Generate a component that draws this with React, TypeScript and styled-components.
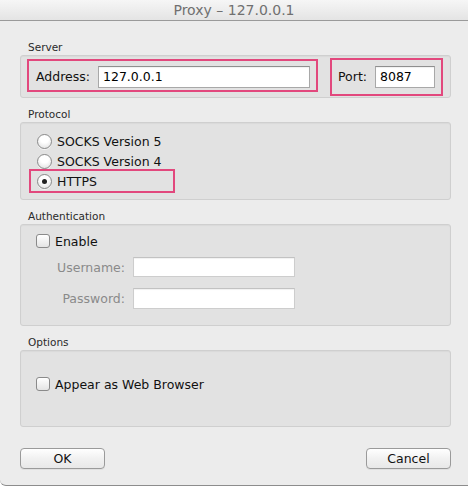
import React from "react";
import styled, { createGlobalStyle } from "styled-components";

const Global = createGlobalStyle`
  html, body { margin: 0; padding: 0; background: #ffffff; }
  body { font-family: "DejaVu Sans", "Liberation Sans", sans-serif; }
  * { box-sizing: border-box; }
`;

const Window = styled.div`
  width: 468px;
  height: 486px;
  background: #ececec;
  border-bottom: 1px solid #8c8c8c;
  border-bottom-left-radius: 6px;
  display: flex;
  flex-direction: column;
  overflow: hidden;
`;

const TitleBar = styled.div`
  height: 21px;
  flex: none;
  background: linear-gradient(#f6f6f6, #e4e4e4);
  border-bottom: 1px solid #9a9a9a;
  display: flex;
  align-items: center;
  justify-content: center;
  font-size: 14px;
  color: #707070;
  line-height: 20px;
`;

const Content = styled.div`
  flex: 1;
  display: flex;
  flex-direction: column;
  padding: 20px 17px 0 20px;
  gap: 10px;
`;

const Section = styled.div`
  display: flex;
  flex-direction: column;
`;

const SectionLabel = styled.div`
  font-size: 10.5px;
  line-height: 13px;
  color: #2a2a2a;
  padding-left: 8px;
  margin-bottom: 1px;
`;

const GroupBox = styled.div<{ $pad: string; $height?: number }>`
  background: #e2e2e2;
  border: 1px solid #cfcfcf;
  border-radius: 3px;
  box-shadow: inset 0 1px 1px rgba(0, 0, 0, 0.04);
  padding: ${(p) => p.$pad};
  ${(p) => (p.$height ? `height: ${p.$height}px;` : "")}
  display: flex;
  flex-direction: column;
`;

const ServerRow = styled.div`
  display: flex;
  align-items: flex-start;
  gap: 12px;
`;

const Highlight = styled.div<{ $w: number; $h: number; $top: number; $pad: string }>`
  width: ${(p) => p.$w}px;
  height: ${(p) => p.$h}px;
  margin-top: ${(p) => p.$top}px;
  border: 2px solid #e2487d;
  padding: ${(p) => p.$pad};
  display: flex;
  align-items: flex-start;
  gap: 8px;
`;

const FieldLabel = styled.span`
  font-size: 12.5px;
  line-height: 22px;
  color: #111;
`;

const TextInput = styled.div<{ $w: number; $h?: number; $dim?: boolean }>`
  width: ${(p) => p.$w}px;
  height: ${(p) => p.$h ?? 22}px;
  background: #ffffff;
  border: 1px solid ${(p) => (p.$dim ? "#cdcdcd" : "#a8a8a8")};
  border-top-color: ${(p) => (p.$dim ? "#c2c2c2" : "#8f8f8f")};
  box-shadow: inset 0 1px 1px rgba(0, 0, 0, 0.06);
  font-size: 12.5px;
  line-height: 20px;
  padding-left: 4px;
  color: #000;
`;

const OptionRow = styled.div<{ $marked?: boolean }>`
  height: ${(p) => (p.$marked ? 24 : 20)}px;
  width: ${(p) => (p.$marked ? "146px" : "auto")};
  margin: ${(p) => (p.$marked ? "-2px 0" : "0")};
  border: ${(p) => (p.$marked ? "2px solid #e2487d" : "none")};
  padding-left: ${(p) => (p.$marked ? 6 : 8)}px;
  display: flex;
  align-items: center;
  gap: 5px;
  font-size: 12.5px;
  color: #111;
`;

const Radio = styled.span<{ $on?: boolean }>`
  width: 15px;
  height: 15px;
  border-radius: 50%;
  border: 1px solid #8a8a8a;
  background: radial-gradient(circle at 50% 30%, #ffffff 35%, #dcdcdc 100%);
  box-shadow: 0 1px 0 rgba(255, 255, 255, 0.6);
  display: flex;
  align-items: center;
  justify-content: center;
  flex: none;
  &::after {
    content: "";
    width: 5px;
    height: 5px;
    border-radius: 50%;
    background: ${(p) => (p.$on ? "#222" : "transparent")};
  }
`;

const Check = styled.span`
  width: 14px;
  height: 14px;
  border-radius: 3px;
  border: 1px solid #8a8a8a;
  background: linear-gradient(#ffffff, #e4e4e4);
  flex: none;
`;

const CheckRow = styled.div`
  height: 20px;
  display: flex;
  align-items: center;
  gap: 5px;
  padding-left: 7px;
  font-size: 12.5px;
  color: #111;
`;

const CredRow = styled.div<{ $top: number }>`
  display: flex;
  align-items: center;
  margin-top: ${(p) => p.$top}px;
  gap: 8px;
`;

const CredLabel = styled.span`
  width: 96px;
  text-align: right;
  font-size: 12.5px;
  color: #8a8a8a;
`;

const ButtonRow = styled.div`
  display: flex;
  justify-content: space-between;
  margin-top: 11px;
`;

const Button = styled.button`
  width: 85px;
  height: 21px;
  border: 1px solid #9a9a9a;
  border-radius: 4px;
  background: linear-gradient(#ffffff, #f1f1f1 50%, #e8e8e8);
  box-shadow: 0 1px 0 rgba(0, 0, 0, 0.05);
  font-family: "DejaVu Sans", "Liberation Sans", sans-serif;
  font-size: 12.5px;
  color: #111;
  padding: 0;
`;

export default function App() {
  return (
    <Window>
      <Global />
      <TitleBar>Proxy – 127.0.0.1</TitleBar>
      <Content>
        <Section>
          <SectionLabel>Server</SectionLabel>
          <GroupBox $pad="2px 7px 1px 6px" $height={43}>
            <ServerRow>
              <Highlight $w={291} $h={33} $top={1} $pad="5px 5px 0 7px">
                <FieldLabel>Address:</FieldLabel>
                <TextInput $w={212}>127.0.0.1</TextInput>
              </Highlight>
              <Highlight $w={113} $h={38} $top={0} $pad="6px 6px 0 6px">
                <FieldLabel>Port:</FieldLabel>
                <TextInput $w={60}>8087</TextInput>
              </Highlight>
            </ServerRow>
          </GroupBox>
        </Section>

        <Section>
          <SectionLabel>Protocol</SectionLabel>
          <GroupBox $pad="8px 8px" $height={78}>
            <OptionRow>
              <Radio />
              SOCKS Version 5
            </OptionRow>
            <OptionRow>
              <Radio />
              SOCKS Version 4
            </OptionRow>
            <OptionRow $marked>
              <Radio $on />
              HTTPS
            </OptionRow>
          </GroupBox>
        </Section>

        <Section>
          <SectionLabel>Authentication</SectionLabel>
          <GroupBox $pad="6px 8px" $height={102}>
            <CheckRow>
              <Check />
              Enable
            </CheckRow>
            <CredRow $top={6}>
              <CredLabel>Username:</CredLabel>
              <TextInput $w={162} $h={20} $dim />
            </CredRow>
            <CredRow $top={11}>
              <CredLabel>Password:</CredLabel>
              <TextInput $w={162} $h={21} $dim />
            </CredRow>
          </GroupBox>
        </Section>

        <Section>
          <SectionLabel>Options</SectionLabel>
          <GroupBox $pad="23px 8px 0 8px" $height={77}>
            <CheckRow>
              <Check />
              Appear as Web Browser
            </CheckRow>
          </GroupBox>
        </Section>

        <ButtonRow>
          <Button>OK</Button>
          <Button>Cancel</Button>
        </ButtonRow>
      </Content>
    </Window>
  );
}
